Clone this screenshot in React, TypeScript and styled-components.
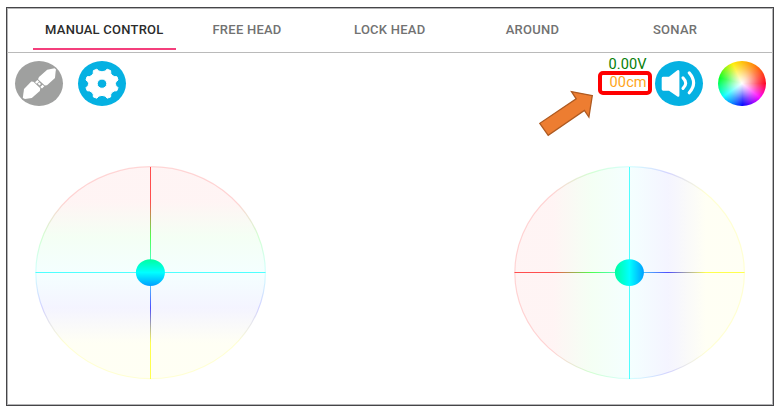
import React from "react";
import styled, { createGlobalStyle } from "styled-components";

const GlobalStyle = createGlobalStyle`
  * { box-sizing: border-box; }
  body { margin: 0; background: #fff; font-family: Roboto, "Liberation Sans", sans-serif; }
`;

const Page = styled.div`
  width: 779px;
  height: 410px;
  padding: 7px 5px 4px 6px;
  overflow: hidden;
`;

const Frame = styled.main`
  display: flex;
  flex-direction: column;
  width: 768px;
  height: 399px;
  border: 1px solid #454548;
  box-shadow: inset 0 0 0 1px #b4b4b6;
`;

const TabBar = styled.nav`
  display: grid;
  grid-template-columns: repeat(5, 142.7px);
  height: 45px;
  flex: none;
  padding-left: 26px;
  border-bottom: 1px solid #bababa;
`;

const Tab = styled.button<{ $active?: boolean }>`
  display: flex;
  align-items: center;
  justify-content: center;
  height: 42px;
  padding: 2px 0 0;
  border: 0;
  border-bottom: 2px solid ${(p) => (p.$active ? "#f43f7c" : "transparent")};
  background: none;
  color: ${(p) => (p.$active ? "#2b2b2b" : "#727272")};
  font: 500 13px Roboto, sans-serif;
  letter-spacing: 0.24px;
  white-space: nowrap;
`;

const Toolbar = styled.div`
  display: flex;
  justify-content: space-between;
  height: 53px;
  flex: none;
  padding: 8px 7.5px 0 7.6px;
`;

const Group = styled.div<{ $gap: number }>`
  display: flex;
  align-items: flex-start;
  gap: ${(p) => p.$gap}px;
`;

const RoundButton = styled.button<{ $color: string }>`
  display: block;
  width: 48px;
  height: 45px;
  padding: 0;
  border: 0;
  border-radius: 50%;
  background: ${(p) => p.$color};

  svg { display: block; width: 48px; height: 45px; }
`;

const ColorWheel = styled.button`
  width: 48px;
  height: 45px;
  padding: 0;
  border: 0;
  border-radius: 50%;
  background:
    radial-gradient(closest-side, #fff 0%, rgba(255, 255, 255, 0.72) 28%, rgba(255, 255, 255, 0.28) 68%, rgba(255, 255, 255, 0) 100%),
    conic-gradient(from 90deg, #ff0020 0deg, #ff00ff 38deg, #0000ff 88deg, #00ffff 145deg, #00ff20 194deg, #ffee00 245deg, #ff8a00 300deg, #ff0020 360deg);
`;

const Readings = styled.div`
  display: flex;
  flex-direction: column;
  align-items: flex-end;
  width: 56px;
  padding-right: 7.5px;
`;

const Reading = styled.span<{ $color: string }>`
  height: 18px;
  margin-top: -6px;
  margin-bottom: 6px;
  color: ${(p) => p.$color};
  font-size: 14px;
  line-height: 18px;
  letter-spacing: 0.1px;
  transform: scaleX(1.04);
  transform-origin: right center;
`;

const Highlight = styled.div`
  position: absolute;
  left: 598px;
  top: 71px;
  width: 54px;
  height: 24px;
  border: 4px solid #ff0000;
  border-radius: 5px;
`;

const Pointer = styled.svg`
  position: absolute;
  left: 534px;
  top: 86px;
  width: 64px;
  height: 54px;
`;

const Controls = styled.section`
  display: flex;
  justify-content: space-between;
  padding: 60px 27px 0 28px;

  svg { display: block; width: 232px; height: 214px; }
`;

const tabs = ["MANUAL CONTROL", "FREE HEAD", "LOCK HEAD", "AROUND", "SONAR"];

const stops: [number, string][] = [
  [0.167, "#ff0000"],
  [0.333, "#00ff00"],
  [0.5, "#00ffff"],
  [0.667, "#0000ff"],
  [0.833, "#ffff00"],
];

function Joystick({ id, vertical }: { id: string; vertical?: boolean }) {
  const paint = `url(#${id})`;
  return (
    <svg viewBox="0 0 232 214">
      <defs>
        <linearGradient
          id={id}
          gradientUnits="userSpaceOnUse"
          x1={vertical ? 0 : 0.5}
          y1={vertical ? 0.5 : 0}
          x2={vertical ? 0 : 230.5}
          y2={vertical ? 212.5 : 0}
        >
          {stops.map(([offset, color]) => (
            <stop key={offset} offset={offset} stopColor={color} />
          ))}
        </linearGradient>
      </defs>
      <ellipse cx="115.6" cy="106.7" rx="115.2" ry="106.3" fill={paint} opacity="0.042" />
      <ellipse cx="115.6" cy="106.7" rx="114.8" ry="106" fill="none" stroke={paint} strokeWidth="1.2" opacity="0.14" />
      <rect x="0.5" y="106" width="230" height="1" fill={paint} opacity="0.68" />
      <rect x="115" y="1" width="1" height="212" fill={paint} opacity="0.68" />
      <ellipse cx="115.4" cy="106.6" rx="14.5" ry="13.4" fill={paint} />
    </svg>
  );
}

function PlugIcon() {
  return (
    <svg viewBox="0 0 48 45">
      <g fill="#fff">
        <path d="M39.5 7.3L32.2 8.8L24 16L23 18.2L29.8 24.6L32 24.2L40 17L40.6 10.8L41 8.4Z" />
        <path d="M16.3 20.4L18.4 20.8L25.3 27.2L24.8 30.1L16.8 37L10 38L7.8 37L9 28Z" />
        <path d="M20 21.2L22.4 18.9L24.1 20.4L21.8 22.8ZM25.2 25.9L27.5 23.7L29.3 25.3L27 27.6Z" />
        <path d="M22.7 22.8L24.2 21.3L26 23L24.5 24.5Z" />
      </g>
    </svg>
  );
}

function GearIcon() {
  return (
    <svg viewBox="0 0 48 45">
      <path
        fill="#fff"
        fillRule="evenodd"
        stroke="#fff"
        strokeWidth="1"
        strokeLinejoin="round"
        d="M18.9 8.2L20.8 10Q24 11.6 27.2 10L29.1 8.2L32.6 9.6L32.8 12.5Q33.8 14.6 36.2 15.5L39 15.8L40 19L38 20.7Q36.7 22.7 38 24.7L40 26.7L38.9 29.7L36.2 30Q33.7 31 32.8 33.1L32.6 36L29.1 37.2L27.2 35.1Q24 33.7 20.8 35.1L18.9 37.2L15.4 36L15.2 33.1Q14.2 31 11.8 30L9.1 29.7L8 26.7L10 24.7Q11.3 22.7 10 20.7L8 19L9 15.8L11.8 15.5Q14.2 14.6 15.2 12.5L15.4 9.6ZM19.2 22.7A4.8 4.6 0 1 0 28.8 22.7A4.8 4.6 0 1 0 19.2 22.7Z"
      />
    </svg>
  );
}

function SpeakerIcon() {
  return (
    <svg viewBox="0 0 48 45">
      <path d="M8.2 15.7H14L22.4 9.2Q24.4 8.4 24.4 10.5V34.3Q24.4 36.4 22.4 35.6L14 29.7H8.2Q6.7 29.7 6.7 28.3V17Q6.7 15.7 8.2 15.7Z" fill="#fff" />
      <path d="M28 16.8Q33.4 22.2 28 27.4M34.2 11.8Q43 22 34.2 31.8" fill="none" stroke="#fff" strokeWidth="3.1" strokeLinecap="round" />
    </svg>
  );
}

export default function App() {
  return (
    <Page>
      <GlobalStyle />
      <Frame>
        <TabBar>
          {tabs.map((label, i) => (
            <Tab key={label} $active={i === 0}>{label}</Tab>
          ))}
        </TabBar>
        <Toolbar>
          <Group $gap={15}>
            <RoundButton $color="#9fa09f" aria-label="Connect"><PlugIcon /></RoundButton>
            <RoundButton $color="#05b1e2" aria-label="Settings"><GearIcon /></RoundButton>
          </Group>
          <Group $gap={15}>
            <Group $gap={0}>
              <Readings>
                <Reading $color="#078007">0.00V</Reading>
                <Reading $color="#ffa51c">00cm</Reading>
              </Readings>
              <RoundButton $color="#05b1e2" aria-label="Sound"><SpeakerIcon /></RoundButton>
            </Group>
            <ColorWheel aria-label="Light color" />
          </Group>
        </Toolbar>
        <Controls>
          <Joystick id="throttle" vertical />
          <Joystick id="direction" />
        </Controls>
      </Frame>
      <Highlight />
      <Pointer viewBox="534 86 64 54">
        <path d="M592.3 95.6L571.5 91.6L576.2 98.8L539.8 123.3L548.2 135.3L584.4 110.4L588.9 117Z" fill="#ed7d31" stroke="#ae5a21" strokeWidth="1.3" />
      </Pointer>
    </Page>
  );
}
